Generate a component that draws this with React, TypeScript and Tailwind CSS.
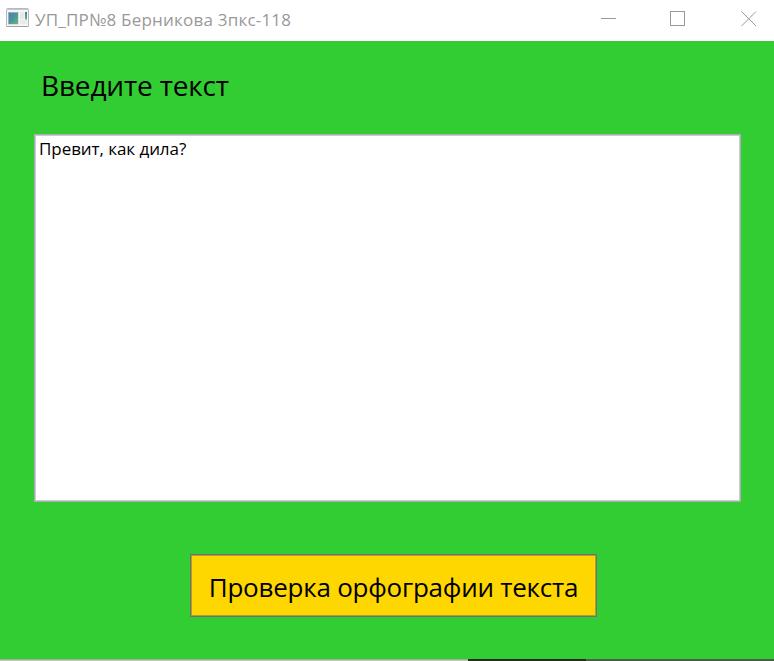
import React from "react";

function AppIcon() {
  return (
    <svg width="24" height="21" viewBox="0 0 24 21" className="shrink-0">
      <defs>
        <linearGradient id="pane" x1="0" y1="0" x2="1" y2="1">
          <stop offset="0" stopColor="#4a80b0" />
          <stop offset="0.5" stopColor="#4a94a0" />
          <stop offset="1" stopColor="#62bd6c" />
        </linearGradient>
        <linearGradient id="bar" x1="0" y1="0" x2="0" y2="1">
          <stop offset="0" stopColor="#4778b8" />
          <stop offset="1" stopColor="#62b96c" />
        </linearGradient>
      </defs>
      <rect x="0.5" y="0.5" width="22" height="18" rx="1" fill="#f5f5f6" stroke="#b4b8c0" />
      <path d="M1 1.5H22" stroke="#c3c7d0" />
      <path d="M0.5 18.5H22.5" stroke="#9fa3aa" />
      <rect x="2.5" y="4.5" width="9.5" height="11.5" fill="url(#pane)" stroke="#8fa0a5" strokeWidth="0.5" />
      <rect x="14" y="4" width="4" height="7" fill="#e7e9e5" />
      <rect x="14" y="12" width="7" height="4" fill="#e9ebe8" />
      <rect x="19" y="4" width="2" height="7.5" fill="url(#bar)" />
    </svg>
  );
}

export default function App() {
  return (
    <div className="flex h-[661px] w-[774px] flex-col overflow-hidden bg-[#32cd32] font-['Open_Sans','Noto_Sans',sans-serif] text-black">
      <header className="flex h-[41px] shrink-0 items-start bg-white pl-[6px] text-[#999999]">
        <div className="pt-[8px]">
          <AppIcon />
        </div>
        <h1 className="ml-[5px] pt-[8px] text-[17px] leading-[24px] tracking-[0.21px] whitespace-nowrap">
          <span>УП_ПР№8 Берникова 3пкс-118</span>
        </h1>
        <div className="mt-[11px] mr-[17px] ml-auto flex">
          <svg width="16" height="16" viewBox="0 0 16 16" fill="none" stroke="currentColor" className="mr-[53px]">
            <path d="M0 7.5H15" />
          </svg>
          <svg width="16" height="16" viewBox="0 0 16 16" fill="none" stroke="currentColor" className="mr-[55px]">
            <rect x="0.5" y="0.5" width="14" height="14" />
          </svg>
          <svg width="16" height="16" viewBox="0 0 16 16" fill="none" stroke="currentColor">
            <path d="M0.5 0.5L15 15M15 0.5L0.5 15" />
          </svg>
        </div>
      </header>
      <main className="flex min-h-0 flex-1 flex-col">
        <h2 className="mt-[24px] ml-[41px] h-[40px] text-[28px] leading-[40px] tracking-[-0.16px] whitespace-nowrap">
          <span>Введите текст</span>
        </h2>
        <div className="mt-[29px] ml-[34px] h-[368px] w-[707px] shrink-0 border border-[#abadb3] bg-white pt-[2px] pl-[4px] text-[17px] leading-[23px] tracking-[-0.06px] shadow-[inset_0_0_0_1px_#c9cbce]">
          <span>Превит, как дила?</span>
        </div>
        <button className="mt-[52px] ml-[190px] flex h-[63px] w-[407px] shrink-0 items-center justify-center border border-[#707070] bg-[#ffd700] pt-[3px] text-[26px] leading-[36px] tracking-[-0.24px] whitespace-nowrap shadow-[inset_0_0_0_1px_#b39d2e]">
          <span>Проверка орфографии текста</span>
        </button>
      </main>
      <footer className="flex h-[2px] shrink-0">
        <div className="h-[2px] w-[468px] border-t border-[#94b494] bg-[#c4c4c4]" />
        <div className="h-[2px] w-[118px] bg-[#252b25]" />
        <div className="h-[2px] flex-1 border-t border-[#3f6b3f] bg-[#505050]" />
      </footer>
    </div>
  );
}
